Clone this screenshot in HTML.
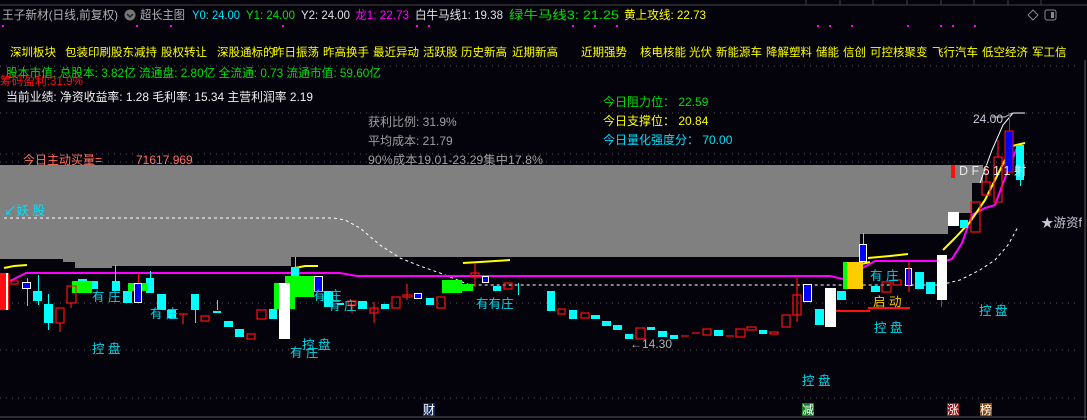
<!DOCTYPE html>
<html><head><meta charset="utf-8"><style>
html,body{margin:0;padding:0;background:#04030c;width:1087px;height:420px;overflow:hidden}
svg{display:block;font-family:"Liberation Sans","Noto Sans CJK SC",sans-serif}
</style></head><body>
<svg width="1087" height="420" viewBox="0 0 1087 420" xmlns="http://www.w3.org/2000/svg">
<rect width="1087" height="420" fill="#04030c"/>
<line x1="0" y1="5" x2="1087" y2="5" stroke="#444" stroke-width="1"/>
<g stroke="#444"><line x1="806" y1="0" x2="806" y2="5"/><line x1="840" y1="0" x2="840" y2="5"/><line x1="873" y1="0" x2="873" y2="5"/><line x1="907" y1="0" x2="907" y2="5"/><line x1="941" y1="0" x2="941" y2="5"/><line x1="974" y1="0" x2="974" y2="5"/><line x1="1008" y1="0" x2="1008" y2="5"/><line x1="1041" y1="0" x2="1041" y2="5"/></g>
<line x1="1085" y1="60" x2="1085" y2="420" stroke="#555"/>
<line x1="0" y1="417" x2="1087" y2="417" stroke="#555"/>
<g stroke="#555" stroke-dasharray="1,5">
<line x1="0" y1="66" x2="1080" y2="66"/><line x1="0" y1="113" x2="1080" y2="113"/><line x1="0" y1="154" x2="1080" y2="154"/><line x1="0" y1="162" x2="1080" y2="162"/><line x1="0" y1="303" x2="1080" y2="303"/><line x1="0" y1="350" x2="1080" y2="350"/><line x1="0" y1="398" x2="1080" y2="398"/>
</g>
<g font-size="12" lengthAdjust="spacingAndGlyphs">
<text x="2" y="19" fill="#b0b0b0" textLength="116" lengthAdjust="spacingAndGlyphs">王子新材(日线,前复权)</text>
<circle cx="130" cy="15" r="5.5" fill="#777"/><path d="M127 14l3 3 3-3" stroke="#222" fill="none" stroke-width="1.5"/>
<text x="140" y="19" fill="#b0b0b0" textLength="45" lengthAdjust="spacingAndGlyphs">超长主图</text>
<text x="192" y="19" fill="#00e0ff" textLength="48" lengthAdjust="spacingAndGlyphs">Y0: 24.00</text>
<text x="246" y="19" fill="#00e000" textLength="49" lengthAdjust="spacingAndGlyphs">Y1: 24.00</text>
<text x="301" y="19" fill="#e0e0e0" textLength="49" lengthAdjust="spacingAndGlyphs">Y2: 24.00</text>
<text x="355" y="19" fill="#ff00ff" textLength="54" lengthAdjust="spacingAndGlyphs">龙1: 22.73</text>
<text x="415" y="19" fill="#e0e0e0" textLength="88" lengthAdjust="spacingAndGlyphs">白牛马线1: 19.38</text>
<text x="509" y="19" fill="#00e000" textLength="110" lengthAdjust="spacingAndGlyphs">绿牛马线3: 21.25</text>
<text x="624" y="19" fill="#ffff00" textLength="82" lengthAdjust="spacingAndGlyphs">黄上攻线: 22.73</text>
</g>
<path d="M1033 10l5 5-5 5-5-5z" stroke="#888" fill="none"/>
<rect x="1045" y="10" width="11" height="10" rx="2" stroke="#888" fill="none"/><rect x="1051" y="12" width="3" height="6" fill="#888"/>
<g fill="#ff00ff"><rect x="2" y="25" width="2" height="2"/><rect x="136" y="25" width="2" height="2"/><rect x="170" y="25" width="2" height="2"/><rect x="282" y="25" width="2" height="2"/><rect x="416" y="25" width="2" height="2"/><rect x="428" y="25" width="2" height="2"/><rect x="572" y="25" width="2" height="2"/><rect x="594" y="25" width="2" height="2"/><rect x="616" y="25" width="2" height="2"/><rect x="817" y="25" width="2" height="2"/><rect x="829" y="25" width="2" height="2"/><rect x="851" y="25" width="2" height="2"/><rect x="907" y="25" width="2" height="2"/><rect x="940" y="25" width="2" height="2"/><rect x="952" y="25" width="2" height="2"/><rect x="974" y="25" width="2" height="2"/></g>
<g font-size="11.5" fill="#ffff00">
<text x="10" y="56">深圳板块</text><text x="65" y="56">包装印刷股东减持</text><text x="161" y="56">股权转让</text><text x="217" y="56">深股通标的</text><text x="273" y="56">昨日振荡</text><text x="323" y="56">昨高换手</text><text x="373" y="56">最近异动</text><text x="423" y="56">活跃股</text><text x="461" y="56">历史新高</text><text x="512" y="56">近期新高</text><text x="581" y="56">近期强势</text><text x="640" y="56">核电核能</text><text x="689" y="56">光伏</text><text x="716" y="56">新能源车</text><text x="766" y="56">降解塑料</text><text x="816" y="56">储能</text><text x="843" y="56">信创</text><text x="870" y="56">可控核聚变</text><text x="932" y="56">飞行汽车</text><text x="982" y="56">低空经济</text><text x="1032" y="56">军工信</text>
</g>
<text x="6" y="77" font-size="12" fill="#00e000" textLength="375" lengthAdjust="spacingAndGlyphs">股本市值: 总股本: 3.82亿 流通盘: 2.80亿 全流通: 0.73 流通市值: 59.60亿</text>
<text x="0" y="85" font-size="12" fill="#ff1010" textLength="83" lengthAdjust="spacingAndGlyphs">筹码盈利:31.9%</text>
<text x="6" y="101" font-size="12" fill="#f0f0f0" textLength="307" lengthAdjust="spacingAndGlyphs">当前业绩: 净资收益率: 1.28 毛利率: 15.34 主营利润率 2.19</text>
<g font-size="12" fill="#a0a0a0">
<text x="368" y="126">获利比例: 31.9%</text><text x="368" y="145">平均成本: 21.79</text><text x="368" y="164" textLength="175" lengthAdjust="spacingAndGlyphs">90%成本19.01-23.29集中17.8%</text>
</g>
<text x="23" y="164" font-size="12" fill="#ff7060">今日主动买量=</text>
<text x="136" y="164" font-size="12" fill="#ff7060">71617.969</text>
<text x="603" y="106" font-size="12" fill="#00e000">今日阻力位： 22.59</text>
<text x="603" y="125" font-size="12" fill="#ffff00">今日支撑位： 20.84</text>
<text x="603" y="144" font-size="12" fill="#00e0ff">今日量化强度分： 70.00</text>
<path d="M0 165H983V183H972V213H948V234H860V257H291V266H112V268H75V262H63V259H0Z" fill="#808080"/>
<text x="4" y="215" font-size="12.5" fill="#00e0ff">↙妖 股</text>
<path d="M4 218H333L345 220L360 228L380 245L400 258L420 266L440 273L455 279L470 285H940L960 280L980 270L995 260L1008 245L1018 227" stroke="#fff" fill="none" stroke-dasharray="3,3"/>
<path d="M980 183L992 150L1003 125L1013 113H1025" stroke="#fff" fill="none"/>
<path d="M992 117H1005L1012 113" stroke="#ccc" fill="none"/>
<text x="973" y="123" font-size="12" fill="#c8c8d8">24.00</text>
<path d="M10 281L20 276L26 273H340L357 276H830L843 279L875 261H946L952 259L962 243L972 215L985 208L995 205L1005 178L1016 150L1022 145" stroke="#ff00ff" stroke-width="2" fill="none"/>
<g stroke="#ffff00" stroke-width="2" fill="none">
<path d="M4 268L14 266L27 265"/><path d="M295 268L305 266L318 266"/><path d="M463 263L480 262L510 260"/><path d="M853 266L870 262"/><path d="M868 258L890 256L908 254"/><path d="M943 250L955 238L970 222L985 200L995 180L1005 160L1012 146L1025 143"/>
</g>
<g fill="#00ffff">
<rect x="27" y="278" width="1" height="28"/><rect x="38" y="275" width="1" height="30"/><rect x="48" y="294" width="1" height="36"/><rect x="115" y="265" width="1" height="20"/><rect x="150" y="271" width="1" height="10"/><rect x="195" y="294" width="1" height="29"/><rect x="217" y="300" width="1" height="10"/><rect x="295" y="257" width="1" height="12"/><rect x="330" y="292" width="1" height="15"/><rect x="518" y="283" width="1" height="12"/><rect x="1020" y="175" width="1" height="11"/><rect x="863" y="233" width="1" height="12"/>
<rect x="33" y="291" width="9" height="10"/><rect x="44" y="304" width="9" height="19"/><rect x="78" y="279" width="9" height="8"/><rect x="92" y="281" width="6" height="8"/><rect x="112" y="281" width="8" height="10"/><rect x="123" y="291" width="9" height="12"/><rect x="146" y="278" width="8" height="15"/><rect x="157" y="294" width="9" height="16"/><rect x="167" y="310" width="9" height="8"/><rect x="191" y="294" width="8" height="16"/><rect x="213" y="311" width="8" height="2"/><rect x="224" y="321" width="9" height="6"/><rect x="235" y="329" width="9" height="8"/><rect x="269" y="309" width="8" height="10"/><rect x="291" y="267" width="8" height="9"/><rect x="324" y="291" width="9" height="16"/><rect x="337" y="303" width="7" height="2"/><rect x="358" y="301" width="9" height="8"/><rect x="381" y="304" width="8" height="5"/><rect x="426" y="298" width="8" height="7"/><rect x="493" y="286" width="8" height="5"/>
<rect x="547" y="291" width="8" height="20"/><rect x="569" y="310" width="8" height="9"/><rect x="591" y="315" width="9" height="4"/><rect x="602" y="321" width="9" height="5"/><rect x="613" y="325" width="9" height="5"/><rect x="625" y="334" width="8" height="5"/><rect x="647" y="327" width="8" height="3"/><rect x="658" y="331" width="9" height="6"/><rect x="670" y="335" width="8" height="4"/><rect x="714" y="330" width="9" height="6"/><rect x="759" y="330" width="8" height="4"/><rect x="815" y="309" width="9" height="16"/><rect x="837" y="291" width="9" height="9"/><rect x="871" y="286" width="9" height="6"/><rect x="915" y="272" width="9" height="17"/><rect x="926" y="282" width="9" height="12"/><rect x="960" y="220" width="8" height="8"/><rect x="1016" y="145" width="8" height="35"/>
</g>
<g fill="#00ff00"><rect x="72" y="281" width="20" height="12"/><rect x="128" y="283" width="20" height="8"/><rect x="274" y="283" width="21" height="26"/><rect x="285" y="276" width="29" height="21"/><rect x="442" y="280" width="20" height="13"/><rect x="462" y="284" width="11" height="7"/><rect x="843" y="262" width="4" height="27"/></g>
<rect x="847" y="262" width="16" height="27" fill="#ffcc00"/>
<g fill="#fff"><rect x="279" y="283" width="11" height="56"/><rect x="825" y="288" width="11" height="39"/><rect x="937" y="255" width="10" height="45"/><rect x="948" y="212" width="11" height="14"/></g>
<rect x="0" y="273" width="9" height="37" fill="#ff1010"/><rect x="6" y="273" width="2" height="37" fill="#fff"/>
<g fill="#0000ff" stroke="#fff" stroke-width="1"><rect x="22.5" y="282.5" width="8" height="6"/><rect x="134.5" y="283.5" width="7" height="19"/><rect x="314.5" y="276.5" width="8" height="15"/><rect x="414.5" y="293.5" width="7" height="5"/><rect x="482.5" y="276.5" width="6" height="6"/><rect x="803.5" y="284.5" width="8" height="17"/><rect x="859.5" y="244.5" width="7" height="17"/><rect x="905.5" y="268.5" width="6" height="17"/></g>
<g fill="#ff1010"><rect x="138" y="273" width="1" height="10"/><rect x="1009" y="113" width="1" height="18"/><rect x="941" y="300" width="1" height="7"/><rect x="951" y="165" width="4" height="13"/></g>
<g stroke="#ff1010" fill="none" stroke-width="1.2">
<rect x="11" y="281" width="7" height="3"/><rect x="56" y="308" width="8" height="15"/><line x1="60" y1="323" x2="60" y2="332"/><rect x="67" y="286" width="9" height="17"/><line x1="71" y1="303" x2="71" y2="308"/><line x1="179" y1="314" x2="188" y2="314"/><line x1="183" y1="314" x2="183" y2="324"/><rect x="201" y="316" width="8" height="5"/><rect x="247" y="334" width="8" height="5"/><rect x="257" y="310" width="9" height="9"/><rect x="348" y="301" width="8" height="4"/><line x1="352" y1="305" x2="352" y2="313"/><rect x="370" y="308" width="8" height="5"/><line x1="374" y1="302" x2="374" y2="323"/><rect x="392" y="297" width="8" height="11"/><rect x="403" y="295" width="9" height="2"/><line x1="407" y1="284" x2="407" y2="300"/><rect x="437" y="297" width="8" height="11"/><rect x="471" y="273" width="8" height="4"/><line x1="475" y1="263" x2="475" y2="287"/><rect x="504" y="283" width="8" height="6"/>
<rect x="558" y="309" width="7" height="5"/><rect x="581" y="313" width="8" height="5"/><rect x="636" y="328" width="9" height="11"/><line x1="681" y1="336" x2="689" y2="336"/><line x1="692" y1="333" x2="700" y2="333"/><rect x="703" y="329" width="8" height="6"/><line x1="726" y1="336" x2="734" y2="336"/><rect x="736" y="329" width="9" height="8"/><rect x="747" y="327" width="9" height="3"/><rect x="770" y="332" width="8" height="2"/><rect x="782" y="315" width="8" height="12"/><rect x="793" y="295" width="8" height="20"/><line x1="797" y1="278" x2="797" y2="322"/><rect x="882" y="282" width="9" height="10"/><rect x="893" y="280" width="8" height="5"/><line x1="909" y1="262" x2="909" y2="292"/><rect x="971" y="202" width="9" height="30"/><rect x="982" y="182" width="8" height="13"/><rect x="994" y="157" width="8" height="45"/><line x1="998" y1="140" x2="998" y2="157"/><line x1="986" y1="165" x2="986" y2="182"/>
<line x1="836" y1="311" x2="870" y2="311" stroke-width="2"/><line x1="868" y1="308" x2="910" y2="308" stroke-width="2"/>
</g>
<rect x="1005" y="131" width="8" height="41" fill="#0000ff" stroke="#ff1010"/>
<g font-size="12.5" fill="#00d8e8">
<text x="92" y="301">有 庄</text><text x="150" y="318">有 庄</text><text x="313" y="300">有 庄</text><text x="328" y="310">有 庄</text><text x="476" y="308">有有庄</text><text x="290" y="357">有 庄</text><text x="870" y="280">有 庄</text>
<text x="92" y="353">控 盘</text><text x="302" y="349">控 盘</text><text x="874" y="332">控 盘</text><text x="979" y="315">控 盘</text><text x="802" y="385">控 盘</text>
</g>
<text x="873" y="306" font-size="12.5" fill="#ffcc00">启 动</text>
<text x="630" y="348" font-size="12" fill="#b0b0b0">←14.30</text>
<text x="959" y="175" font-size="12.5" fill="#e8e8e8">D F 6 1 1 射</text>
<text x="1041" y="227" font-size="12.5" fill="#c8c8d8">★游资f</text>
<rect x="423" y="403" width="12" height="13" fill="#102a60"/><text x="423" y="414" font-size="12" fill="#fff">财</text>
<rect x="802" y="403" width="12" height="13" fill="#108020"/><text x="802" y="414" font-size="12" fill="#fff">减</text>
<rect x="947" y="403" width="12" height="13" fill="#a01010"/><text x="947" y="414" font-size="12" fill="#fff">涨</text>
<rect x="980" y="403" width="12" height="13" fill="#8a4a10"/><text x="980" y="414" font-size="12" fill="#fff">榜</text>
</svg>
</body></html>
